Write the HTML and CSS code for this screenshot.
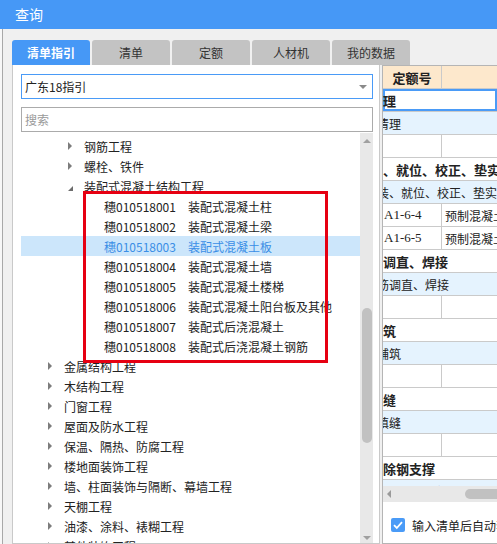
FILE: index.html
```html
<!DOCTYPE html>
<html>
<head>
<meta charset="utf-8">
<link rel="stylesheet" href="styles.css">
</head>
<body>
<div class="win">
  <div class="titlebar">查询</div>
  <div class="main">
    <div class="tabs">
      <div class="tab active">清单指引</div>
      <div class="tab">清单</div>
      <div class="tab">定额</div>
      <div class="tab">人材机</div>
      <div class="tab">我的数据</div>
    </div>
    <div class="content">
      <div class="left">
        <div class="select"><span>广东18指引</span><span class="caret"></span></div>
        <div class="search">搜索</div>
        <div class="treebox">
          <div class="tree">
            <div class="row l1"><span class="tw"><span class="tri"></span></span>钢筋工程</div>
            <div class="row l1"><span class="tw"><span class="tri"></span></span>螺栓、铁件</div>
            <div class="row l1"><span class="tw"><span class="tri open"></span></span>装配式混凝土结构工程</div>
            <div class="row l2"><span class="code">穗010518001</span><span>装配式混凝土柱</span></div>
            <div class="row l2"><span class="code">穗010518002</span><span>装配式混凝土梁</span></div>
            <div class="row l2 sel"><span class="code">穗010518003</span><span>装配式混凝土板</span></div>
            <div class="row l2"><span class="code">穗010518004</span><span>装配式混凝土墙</span></div>
            <div class="row l2"><span class="code">穗010518005</span><span>装配式混凝土楼梯</span></div>
            <div class="row l2"><span class="code">穗010518006</span><span>装配式混凝土阳台板及其他</span></div>
            <div class="row l2"><span class="code">穗010518007</span><span>装配式后浇混凝土</span></div>
            <div class="row l2"><span class="code">穗010518008</span><span>装配式后浇混凝土钢筋</span></div>
            <div class="row l0"><span class="tw"><span class="tri"></span></span>金属结构工程</div>
            <div class="row l0"><span class="tw"><span class="tri"></span></span>木结构工程</div>
            <div class="row l0"><span class="tw"><span class="tri"></span></span>门窗工程</div>
            <div class="row l0"><span class="tw"><span class="tri"></span></span>屋面及防水工程</div>
            <div class="row l0"><span class="tw"><span class="tri"></span></span>保温、隔热、防腐工程</div>
            <div class="row l0"><span class="tw"><span class="tri"></span></span>楼地面装饰工程</div>
            <div class="row l0"><span class="tw"><span class="tri"></span></span>墙、柱面装饰与隔断、幕墙工程</div>
            <div class="row l0"><span class="tw"><span class="tri"></span></span>天棚工程</div>
            <div class="row l0"><span class="tw"><span class="tri"></span></span>油漆、涂料、裱糊工程</div>
            <div class="row l0"><span class="tw"><span class="tri"></span></span>其他装饰工程</div>
            <div class="mark"></div>
          </div>
          <div class="vscroll">
            <span class="up"></span>
            <span class="thumb"></span>
            <span class="down"></span>
          </div>
        </div>
      </div>
      <div class="right">
        <div class="grid">
          <div class="gr head"><div class="c1">定额号</div><div class="c2"></div></div>
          <div class="gr grp cur"><span>理</span></div>
          <div class="gr sub"><span class="cut">清理</span></div>
          <div class="gr"><div class="c1"></div><div class="c2"></div></div>
          <div class="gr grp"><span>、就位、校正、垫实</span></div>
          <div class="gr sub"><span class="cut">装、就位、校正、垫实</span></div>
          <div class="gr"><div class="c1 num">A1-6-4</div><div class="c2">预制混凝土构件</div></div>
          <div class="gr"><div class="c1 num">A1-6-5</div><div class="c2">预制混凝土构件</div></div>
          <div class="gr grp"><span>调直、焊接</span></div>
          <div class="gr sub"><span class="cut">筋调直、焊接</span></div>
          <div class="gr"><div class="c1"></div><div class="c2"></div></div>
          <div class="gr grp"><span>筑</span></div>
          <div class="gr sub"><span class="cut">铺筑</span></div>
          <div class="gr"><div class="c1"></div><div class="c2"></div></div>
          <div class="gr grp"><span>缝</span></div>
          <div class="gr sub"><span class="cut">填缝</span></div>
          <div class="gr"><div class="c1"></div><div class="c2"></div></div>
          <div class="gr grp"><span>除钢支撑</span></div>
          <div class="gr sub top"><span>安装、拆除钢支撑</span></div>
        </div>
        <div class="hs"><span class="la"></span><span class="hthumb"></span></div>
        <div class="foot">
          <svg class="cb" width="14" height="14" viewBox="0 0 14 14"><rect x="0" y="0" width="14" height="14" rx="2" fill="#4a9bf7"/><path d="M3 7.2 L5.8 10 L11 4.2" fill="none" stroke="#fff" stroke-width="1.8"/></svg>
          <span class="ft">输入清单后自动套用定额</span>
        </div>
      </div>
    </div>
  </div>
</div>
</body>
</html>
```

FILE: styles.css
```css
* { box-sizing: border-box; }
body {
  margin: 0;
  background: #f0f0f0;
  font-family: "Noto Sans CJK SC", "Noto Sans", sans-serif;
  font-size: 12px;
  color: #222;
}
.win {
  width: 497px;
  height: 544px;
  overflow: hidden;
  display: flex;
  flex-direction: column;
}
.titlebar {
  flex: none;
  height: 29px;
  background: #4698f6;
  color: #fff;
  font-size: 14px;
  line-height: 29px;
  padding-left: 15px;
}
.main {
  flex: 1;
  min-height: 0;
  padding: 11px 0 0 12px;
  display: flex;
  flex-direction: column;
  background: linear-gradient(to right, #f7f7f7 0 2px, #a8a8a8 2px 3px, #f0f0f0 3px);
}
.tabs {
  flex: none;
  display: flex;
  gap: 2px;
  height: 25px;
}
.tab {
  width: 78px;
  background: #c3c3c3;
  border-radius: 3px 3px 0 0;
  text-align: center;
  line-height: 25px;
  color: #333;
}
.tab.active {
  background: #4698f6;
  color: #fff;
  font-weight: bold;
}
.content {
  flex: none;
  display: flex;
  height: 479px;
}
.left {
  width: 368px;
  flex: none;
  background: #fff;
  border: 1px solid #c9c9c9;
  border-top: none;
  padding: 9px 6px 0 8px;
  display: flex;
  flex-direction: column;
}
.select {
  flex: none;
  height: 25px;
  border: 1px solid #4a9bf7;
  padding: 0 5px 0 3px;
  display: flex;
  align-items: center;
  justify-content: space-between;
}
.caret {
  width: 0;
  height: 0;
  border-top: 4px solid #8a8a8a;
  border-left: 4px solid transparent;
  border-right: 4px solid transparent;
}
.search {
  flex: none;
  margin-top: 8px;
  height: 25px;
  border: 1px solid #ababab;
  padding-left: 3px;
  line-height: 23px;
  color: #9a9a9a;
}
.treebox {
  flex: 1;
  min-height: 0;
  margin-top: 1px;
  display: flex;
  overflow: hidden;
}
.tree {
  flex: 1;
  position: relative;
  padding-top: 3px;
  overflow: hidden;
}
.row {
  height: 20px;
  display: flex;
  align-items: center;
  white-space: nowrap;
}
.row.sel {
  background: #cce6fb;
  color: #3a8ee6;
}
.l0 { padding-left: 27px; }
.l1 { padding-left: 47px; }
.l2 { padding-left: 83px; }
.tw {
  width: 16px;
  flex: none;
  display: flex;
  align-items: center;
}
.tri {
  width: 0;
  height: 0;
  border-left: 4px solid #7c7c7c;
  border-top: 4px solid transparent;
  border-bottom: 4px solid transparent;
}
.tri.open {
  border-left: 5px solid transparent;
  border-bottom: 5px solid #6c6c6c;
  border-top: 0;
  margin-top: 5px;
}
.code {
  width: 84px;
  flex: none;
}
.mark {
  position: absolute;
  left: 62px;
  top: 58px;
  width: 245px;
  height: 172px;
  border: 3px solid #e60012;
}
.vscroll {
  width: 13px;
  flex: none;
  background: #e8e8e8;
  display: flex;
  flex-direction: column;
  align-items: center;
}
.up {
  margin-top: 6px;
  width: 0;
  height: 0;
  border-bottom: 4px solid #a0a0a0;
  border-left: 4px solid transparent;
  border-right: 4px solid transparent;
}
.thumb {
  margin-top: 165px;
  width: 10px;
  height: 135px;
  background: #c1c1c1;
  border-radius: 5px;
}
.down {
  margin-top: auto;
  margin-bottom: 3px;
  width: 0;
  height: 0;
  border-top: 4px solid #a0a0a0;
  border-left: 4px solid transparent;
  border-right: 4px solid transparent;
}
.right {
  flex: 1;
  min-width: 0;
  margin-left: 2px;
  background: #fff;
  border: 1px solid #b5b5b5;
  border-right: none;
  display: flex;
  flex-direction: column;
  overflow: hidden;
}
.grid {
  flex: 1;
  min-height: 0;
  overflow: hidden;
}
.gr {
  height: 23px;
  border-bottom: 1px solid #cacaca;
  display: flex;
  align-items: center;
  white-space: nowrap;
  overflow: hidden;
}
.head {
  background: #fde8cc;
  font-weight: bold;
  font-size: 13px;
}
.c1 {
  width: 59px;
  height: 100%;
  flex: none;
  border-right: 1px solid #cacaca;
  display: flex;
  align-items: center;
}
.head .c1 { justify-content: center; }
.c2 {
  padding-left: 3px;
}
.num {
  font-family: "Liberation Serif", serif;
  font-size: 13px;
  padding-left: 1px;
}
.grp { font-weight: bold; font-size: 13px; }
.sub { background: #e5f3fe; }
.cut { margin-left: -6px; }
.cur {
  background: #fff;
  box-shadow: inset 0 0 0 2px #4a9bf7;
}
.top { align-items: flex-start; padding-top: 3px; }
.hs {
  flex: none;
  height: 16px;
  background: #e8e8e8;
  display: flex;
  align-items: center;
}
.la {
  width: 0;
  height: 0;
  margin-left: 4px;
  border-right: 4px solid #9a9a9a;
  border-top: 4px solid transparent;
  border-bottom: 4px solid transparent;
}
.hthumb {
  margin-left: auto;
  margin-right: -8px;
  width: 40px;
  height: 10px;
  border-radius: 5px;
  background: #c1c1c1;
}
.foot {
  flex: none;
  height: 41px;
  display: flex;
  align-items: center;
  padding: 5px 0 0 8px;
  gap: 7px;
  white-space: nowrap;
}
.cb { flex: none; }
```
